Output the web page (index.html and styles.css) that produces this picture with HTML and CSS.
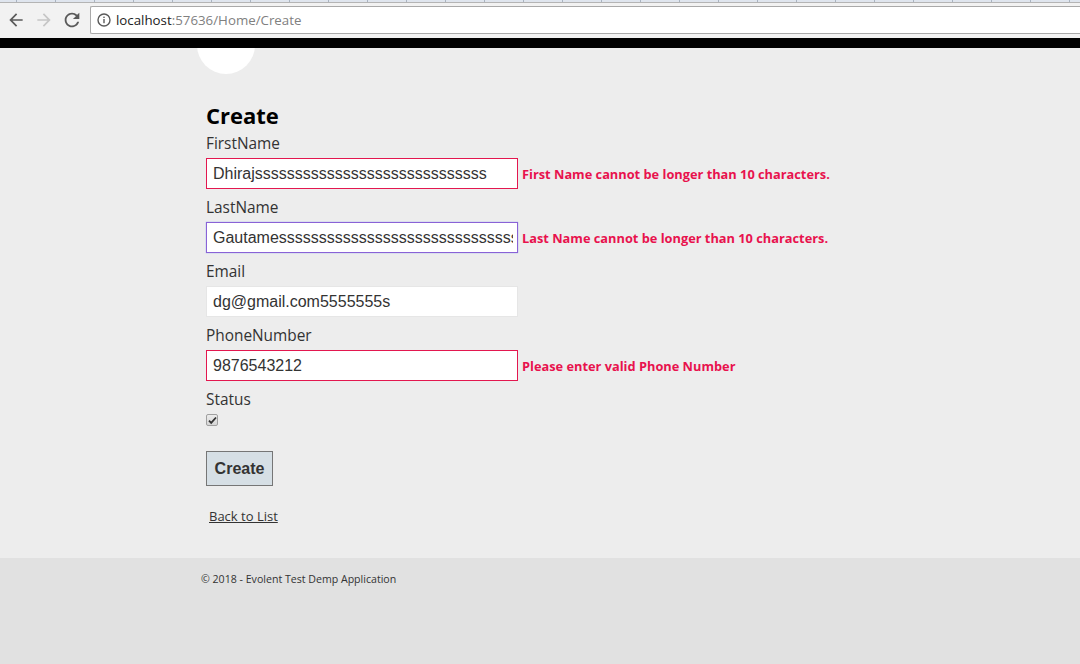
FILE: index.html
```html
<!DOCTYPE html>
<html lang="en">
<head>
<meta charset="utf-8">
<title>Create</title>
<link rel="stylesheet" href="styles.css">
</head>
<body>
<div class="chrome">
  <div class="tabstrip"></div>
  <div class="toolbar">
    <span class="nav-btn back">
      <svg width="20" height="20" viewBox="0 0 24 24"><path d="M20 11H7.83l5.59-5.590L12 4l-8 8 8 8 1.41-1.41L7.83 13H20v-2z" fill="#5a5a5a"/></svg>
    </span>
    <span class="nav-btn fwd">
      <svg width="20" height="20" viewBox="0 0 24 24"><path d="M4 11h12.17l-5.59-5.59L12 4l8 8-8 8-1.41-1.41L16.17 13H4v-2z" fill="#c6c6c6"/></svg>
    </span>
    <span class="nav-btn reload">
      <svg width="22" height="22" viewBox="0 0 24 24"><path d="M17.65 6.35A7.958 7.958 0 0012 4c-4.42 0-7.99 3.58-7.99 8s3.57 8 7.99 8c3.73 0 6.84-2.55 7.73-6h-2.08A5.99 5.99 0 0112 18c-3.31 0-6-2.69-6-6s2.69-6 6-6c1.66 0 3.14.69 4.22 1.78L13 11h7V4l-2.35 2.35z" fill="#5a5a5a"/></svg>
    </span>
    <div class="omnibox">
      <span class="info-icon">
        <svg width="14" height="14" viewBox="0 0 14 14"><circle cx="7" cy="7" r="6" fill="none" stroke="#5a5a5a" stroke-width="1.4"/><rect x="6.3" y="6" width="1.4" height="4.2" fill="#5a5a5a"/><rect x="6.3" y="3.6" width="1.4" height="1.4" fill="#5a5a5a"/></svg>
      </span>
      <span class="url"><span class="host">localhost</span>:57636/Home/Create</span>
    </div>
  </div>
</div>

<div class="navbar"></div>
<div class="logo"></div>

<main class="main">
  <div class="container">
    <h2 class="title">Create</h2>

    <div class="form-group">
      <label class="field-label">FirstName</label>
      <div class="field-row">
        <input class="field-input invalid" type="text" value="Dhirajsssssssssssssssssssssssssssss">
        <span class="field-error">First Name cannot be longer than 10 characters.</span>
      </div>
    </div>

    <div class="form-group">
      <label class="field-label">LastName</label>
      <div class="field-row">
        <input class="field-input focused" type="text" value="Gautamessssssssssssssssssssssssssssssssss">
        <span class="field-error">Last Name cannot be longer than 10 characters.</span>
      </div>
    </div>

    <div class="form-group">
      <label class="field-label">Email</label>
      <div class="field-row">
        <input class="field-input" type="text" value="dg@gmail.com5555555s">
      </div>
    </div>

    <div class="form-group">
      <label class="field-label">PhoneNumber</label>
      <div class="field-row">
        <input class="field-input invalid" type="text" value="9876543212">
        <span class="field-error">Please enter valid Phone Number</span>
      </div>
    </div>

    <div class="form-group status-group">
      <label class="field-label">Status</label>
      <span class="checkbox">
        <svg width="9" height="9" viewBox="0 0 9 9"><path d="M1 4.6l2.2 2.3L8 1.5" fill="none" stroke="#333" stroke-width="1.8"/></svg>
      </span>
    </div>

    <button class="btn-create" type="button">Create</button>

    <div class="back-link"><a href="#">Back to List</a></div>
  </div>
</main>

<footer class="footer">
  <p class="copyright">&copy; 2018 - Evolent Test Demp Application</p>
</footer>
</body>
</html>
```

FILE: styles.css
```css
* { box-sizing: border-box; }

html, body {
  margin: 0;
  padding: 0;
}

body {
  width: 1080px;
  height: 664px;
  overflow: hidden;
  background: #e1e1e1;
  font-family: "Open Sans", "Noto Sans", sans-serif;
  color: #333;
  position: relative;
}

/* ---------- browser chrome ---------- */
.chrome {
  background: #f2f2f2;
  position: relative;
  z-index: 3;
}

.tabstrip {
  height: 3px;
  background-color: #dfe5ee;
  background-image: repeating-linear-gradient(to right, transparent 0, transparent 16px, #a9b3c0 16px, #a9b3c0 17px, transparent 17px, transparent 39px);
  border-bottom: 1px solid #b4b4b4;
}

.toolbar {
  height: 35px;
  display: flex;
  align-items: flex-start;
  padding-top: 3px;
}

.nav-btn {
  width: 28px;
  height: 28px;
  display: flex;
  align-items: center;
  justify-content: center;
}

.back { margin-left: 2px; }

.omnibox {
  margin-left: 4px;
  flex: 1;
  height: 28px;
  background: #fff;
  border: 1px solid #a9a9a9;
  border-right: none;
  border-radius: 2px 0 0 2px;
  display: flex;
  align-items: center;
}

.info-icon {
  width: 25px;
  display: flex;
  justify-content: center;
  padding-left: 1px;
}

.url {
  font-family: "Open Sans", sans-serif;
  font-size: 13.3px;
  color: #808080;
}

.host { color: #222; }

/* ---------- site ---------- */
.navbar {
  height: 10px;
  background: #000;
  position: relative;
  z-index: 2;
}

.logo {
  position: absolute;
  left: 197px;
  top: 16px;
  width: 58px;
  height: 58px;
  border-radius: 50%;
  background: #fff;
  z-index: 1;
}

.main {
  background: #ededed;
  height: 510px;
  padding-top: 53px;
}

.container {
  padding-left: 206px;
}

.title {
  margin: 0 0 4px;
  font-size: 22px;
  line-height: 28px;
  font-weight: 700;
  color: #000;
}

.form-group {
  margin-bottom: 8px;
}

.field-label {
  display: block;
  font-size: 15.4px;
  line-height: 20px;
  padding-top: 1px;
  color: #333;
  margin-bottom: 4px;
}

.field-row {
  display: flex;
  align-items: center;
}

.field-input {
  width: 312px;
  height: 31px;
  margin: 0;
  padding: 0 4px 0 6px;
  border: 1px solid #e6e6e6;
  border-radius: 0;
  background: #fff;
  font-family: "Liberation Sans", Arial, sans-serif;
  font-size: 16px;
  color: #333;
  outline: none;
}

.field-input.invalid { border-color: #e3174f; }

.field-input.focused {
  border-color: #8a62d6;
  box-shadow: 0 0 1px 0 #7d9cf2;
}

.field-error {
  margin-left: 4px;
  font-size: 12.8px;
  font-weight: 700;
  color: #e8124d;
  white-space: nowrap;
}

.status-group {
  margin-bottom: 25px;
}

.checkbox {
  display: flex;
  width: 12px;
  height: 12px;
  border: 1px solid #a0a0a0;
  border-radius: 2px;
  background: linear-gradient(#ececec, #d6d6d6);
  align-items: center;
  justify-content: center;
}

.btn-create {
  display: block;
  width: 67px;
  height: 35px;
  margin: 0;
  padding: 0;
  background: #d6dfe5;
  border: 1px solid #767676;
  border-radius: 0;
  font-family: "Liberation Sans", Arial, sans-serif;
  font-size: 16px;
  font-weight: 700;
  color: #333;
}

.back-link {
  margin-top: 21px;
  padding-left: 3px;
  font-size: 13px;
  line-height: 18px;
}

.back-link a {
  color: #333;
  text-decoration: underline;
}

.footer {
  height: 106px;
  background: #e1e1e1;
  padding-top: 13px;
  padding-left: 201px;
}

.copyright {
  margin: 0;
  font-size: 10.6px;
  line-height: 16px;
  color: #333;
}
```
